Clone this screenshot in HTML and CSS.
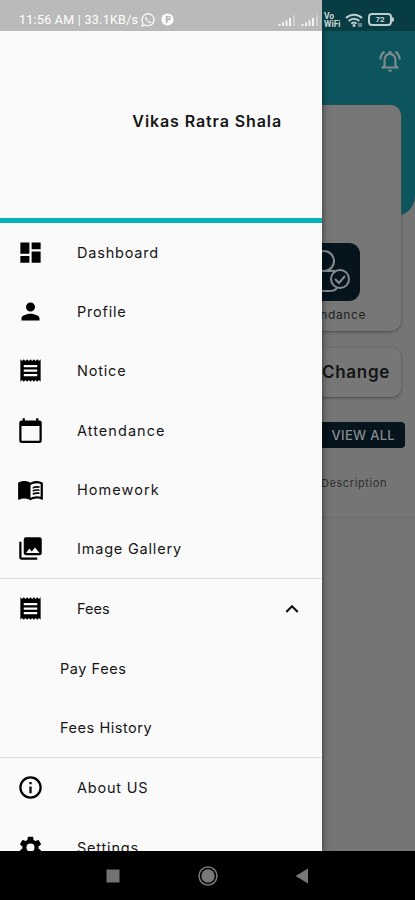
FILE: index.html
```html
<!DOCTYPE html>
<html lang="en">
<head>
<meta charset="utf-8">
<title>Vikas Ratra Shala</title>
<link rel="stylesheet" href="styles.css">
</head>
<body>
<div class="phone">
  <main class="page">
    <div class="hero">
      <svg class="bell" viewBox="0 0 24 24"><path d="M12 22a2 2 0 0 0 2-2h-4a2 2 0 0 0 2 2zm6-6v-5c0-3.070-1.630-5.640-4.500-6.320V4a1.500 1.500 0 0 0-3 0v.68C7.640 5.360 6 7.920 6 11v5l-2 2v1h16v-1l-2-2zm-2 1H8v-6c0-2.480 1.510-4.500 4-4.500s4 2.020 4 4.500v6zM7.580 4.080 6.150 2.650C3.750 4.480 2.170 7.300 2.030 10.500h2a8.450 8.450 0 0 1 3.550-6.420zM19.970 10.500h2c-.15-3.200-1.730-6.020-4.120-7.850l-1.420 1.430a8.500 8.500 0 0 1 3.540 6.420z"/></svg>
    </div>
    <section class="card">
      <div class="tile">
        <svg viewBox="0 0 58 58"><g fill="none" stroke="#858b8f" stroke-width="2"><circle cx="22" cy="18" r="10"/><path d="M34 29c-3-2-6-1-8-1H18C11 28 8 34 8 40v8h18c4 0 7 0 9-3"/><circle cx="38" cy="36" r="9"/><path d="m33 36 4 4 6-7"/></g></svg>
      </div>
      <span class="tile-label">Attendance</span>
    </section>
    <section class="change">Change</section>
    <div class="view-all">VIEW ALL</div>
    <div class="table-head"><span>Description</span></div>
  </main>

  <aside class="drawer">
    <header class="drawer-head">Vikas Ratra Shala</header>
    <nav class="menu">
      <a class="item"><svg viewBox="0 0 24 24"><path d="M3 13h8V3H3v10zm0 8h8v-6H3v6zm10 0h8V11h-8v10zm0-18v6h8V3h-8z"/></svg><span>Dashboard</span></a>
      <a class="item"><svg viewBox="0 0 24 24"><path d="M12 12a4 4 0 1 0 0-8 4 4 0 0 0 0 8zm0 2c-2.670 0-8 1.340-8 4v2h16v-2c0-2.660-5.330-4-8-4z"/></svg><span>Profile</span></a>
      <a class="item"><svg viewBox="0 0 24 24"><path d="M18 17H6v-2h12v2zm0-4H6v-2h12v2zm0-4H6V7h12v2zM3 22l1.500-1.500L6 22l1.500-1.500L9 22l1.500-1.500L12 22l1.500-1.500L15 22l1.500-1.500L18 22l1.500-1.500L21 22V2l-1.500 1.500L18 2l-1.500 1.500L15 2l-1.500 1.500L12 2l-1.500 1.500L9 2 7.500 3.500 6 2 4.500 3.500 3 2v20z"/></svg><span>Notice</span></a>
      <a class="item wide"><svg viewBox="0 0 24 24"><path d="M20 3h-1V1h-2v2H7V1H5v2H4a2 2 0 0 0-2 2v16c0 1.100.9 2 2 2h16a2 2 0 0 0 2-2V5a2 2 0 0 0-2-2zm0 18H4V8h16v13z"/></svg><span>Attendance</span></a>
      <a class="item wide"><svg viewBox="0 0 24 24"><path d="M21 5c-1.110-.35-2.330-.5-3.500-.5-1.950 0-4.050.4-5.500 1.500-1.450-1.100-3.550-1.500-5.500-1.500S2.450 4.900 1 6v14.650c0 .25.250.5.5.5.1 0 .15-.05.25-.05C3.100 20.450 5.050 20 6.500 20c1.950 0 4.050.4 5.500 1.500 1.350-.85 3.800-1.500 5.500-1.500 1.650 0 3.350.3 4.750 1.050.1.050.15.050.25.050.25 0 .5-.25.5-.5V6c-.6-.45-1.250-.75-2-1zm0 13.500c-1.100-.35-2.300-.5-3.500-.5-1.700 0-4.150.65-5.500 1.500V8c1.350-.85 3.800-1.500 5.500-1.500 1.200 0 2.400.15 3.500.5v11.500z"/><path d="M14 9.700c2-.8 4-.9 6-.5v1.500c-2-.4-4-.2-6 .6zm0 2.700c2-.8 4-.9 6-.5v1.500c-2-.4-4-.2-6 .6zm0 2.700c2-.8 4-.9 6-.5v1.500c-2-.4-4-.2-6 .6z"/></svg><span>Homework</span></a>
      <a class="item"><svg viewBox="0 0 24 24"><path d="M22 16V4a2 2 0 0 0-2-2H8a2 2 0 0 0-2 2v12c0 1.100.9 2 2 2h12a2 2 0 0 0 2-2zm-11-4 2.030 2.710L16 11l4 5H8l3-4zM2 6v14c0 1.100.9 2 2 2h14v-2H4V6H2z"/></svg><span>Image Gallery</span></a>
      <div class="group">
        <a class="item tight"><svg viewBox="0 0 24 24"><path d="M18 17H6v-2h12v2zm0-4H6v-2h12v2zm0-4H6V7h12v2zM3 22l1.500-1.500L6 22l1.500-1.500L9 22l1.500-1.500L12 22l1.500-1.500L15 22l1.500-1.500L18 22l1.500-1.500L21 22V2l-1.500 1.500L18 2l-1.500 1.500L15 2l-1.500 1.500L12 2l-1.500 1.500L9 2 7.500 3.500 6 2 4.500 3.500 3 2v20z"/></svg><span>Fees</span><svg class="chevron" viewBox="0 0 24 24"><path d="m12 8-6 6 1.410 1.410L12 10.830l4.590 4.580L18 14z"/></svg></a>
        <a class="item sub"><span>Pay Fees</span></a>
        <a class="item sub"><span>Fees History</span></a>
      </div>
      <a class="item"><svg viewBox="0 0 24 24"><path d="M11 7h2v2h-2zm0 4h2v6h-2zm1-9a10 10 0 1 0 0 20 10 10 0 0 0 0-20zm0 18a8 8 0 1 1 0-16 8 8 0 0 1 0 16z"/></svg><span>About US</span></a>
      <a class="item"><svg viewBox="0 0 24 24"><path d="M19.140 12.940c.04-.3.060-.61.060-.94 0-.32-.02-.64-.07-.94l2.030-1.580c.18-.14.230-.41.120-.61l-1.920-3.320c-.12-.22-.37-.29-.59-.22l-2.390.96c-.5-.38-1.030-.7-1.620-.94L14.400 2.810c-.04-.24-.24-.41-.48-.41h-3.840c-.24 0-.43.170-.47.410L9.250 5.350c-.59.240-1.130.570-1.620.940L5.240 5.330c-.22-.08-.47 0-.59.220L2.740 8.870c-.12.210-.08.470.120.610l2.030 1.580c-.05.300-.09.630-.09.940s.02.640.070.940l-2.030 1.580c-.18.140-.23.410-.12.610l1.920 3.320c.12.220.370.290.590.220l2.390-.96c.5.380 1.030.700 1.620.940l.36 2.540c.05.240.240.410.480.410h3.840c.24 0 .44-.17.470-.41l.36-2.540c.59-.24 1.130-.56 1.620-.94l2.390.96c.22.080.470 0 .59-.22l1.920-3.320c.12-.22.070-.47-.12-.61l-2.010-1.580zM12 15.600a3.600 3.600 0 1 1 0-7.200 3.600 3.600 0 0 1 0 7.200z"/></svg><span>Settings</span></a>
    </nav>
  </aside>

  <div class="status">
    <span class="clock">11:56 AM | 33.1KB/s</span>
    <svg class="whatsapp" viewBox="0 0 14 14"><path d="m1 13 .9-3.200A6 6 0 1 1 4.200 12z" fill="none" stroke="#fff" stroke-width="1.200"/><path d="M4.500 3.800c-1 1.200 0 3 1.500 4.500s3.300 2.200 4.200 1.100l-1.600-1.300-.9.600-1.900-2 .5-.9z" fill="#fff"/></svg>
    <svg class="badge" viewBox="0 0 14 14"><circle cx="7" cy="7" r="6.500" fill="#fff"/><path d="M5 3h3.500a2.200 2.200 0 0 1 0 5H7v3H5z" fill="#bababa"/><path d="M7 5h3" stroke="#fff" stroke-width="1"/></svg>
    <span class="spacer"></span>
    <svg class="signal" viewBox="0 0 18 12"><path d="M0 10h2v2H0zM3.500 8.500h2V12h-2zM7 6.500h2V12H7zM10.500 4h2v8h-2z" fill="#f3f3f3"/><path d="M14.500 1h2v11h-2z" fill="#d0d0d0"/></svg>
    <svg class="signal" viewBox="0 0 18 12"><path d="M0 10h2v2H0zM3.500 8.500h2V12h-2zM7 6.500h2V12H7zM10.500 4h2v8h-2z" fill="#f3f3f3"/><path d="M14.500 1h2v11h-2z" fill="#d0d0d0"/></svg>
    <span class="vowifi">Vo<br>WiFi</span>
    <svg class="wifi" viewBox="0 0 18 14"><g fill="none" stroke="#bdcccd" stroke-width="2"><path d="M1 5c4.500-4.500 11.500-4.500 16 0"/><path d="M3.700 8c3-3 7.600-3 10.600 0"/><path d="M6.300 10.700c1.600-1.500 3.800-1.500 5.400 0"/></g><circle cx="9" cy="12.500" r="1.500" fill="#bdcccd"/><path d="M14 10v4m2-4v4" stroke="#bdcccd"/></svg>
    <span class="battery">72</span>
  </div>

  <footer class="navbar">
    <svg viewBox="0 0 24 24"><path d="M5.500 5.500h13v13h-13z" fill="#737373"/></svg>
    <svg viewBox="0 0 24 24"><circle cx="12" cy="12" r="9" fill="none" stroke="#777" stroke-width="1.500"/><circle cx="12" cy="12" r="6.700" fill="#777"/></svg>
    <svg viewBox="0 0 24 24"><path d="M4.500 12 17 4.500v15z" fill="#777"/></svg>
  </footer>
</div>
</body>
</html>
```
FILE: styles.css
```css
* { box-sizing: border-box; }

body {
  margin: 0;
  font-family: Inter, "Liberation Sans", sans-serif;
  color: #161616;
}

.phone {
  position: relative;
  display: flex;
  flex-direction: column;
  width: 415px;
  height: 900px;
  overflow: hidden;
  background: #000;
}

/* Dimmed screen behind the drawer */
.page {
  display: flex;
  flex-direction: column;
  align-items: flex-end;
  height: 851px;
  background: #757575;
  color: #121416;
}
.hero {
  flex: none;
  display: flex;
  justify-content: flex-end;
  align-items: flex-start;
  width: 100%;
  height: 216px;
  padding: 48px 12px 0 0;
  border-radius: 0 0 20px 20px;
  background: #0d555e;
}
.bell { width: 26px; height: 26px; fill: #7d8b8c; }
.card {
  flex: none;
  display: flex;
  flex-direction: column;
  align-items: flex-end;
  width: 386px;
  height: 226px;
  margin: -111px 14px 0 0;
  padding: 138px 41px 0 0;
  border-radius: 10px;
  background: #777;
  box-shadow: 0 1px 3px #4b4b4b;
}
.tile {
  width: 58px;
  height: 58px;
  border-radius: 11px;
  background: #06141d;
}
.tile svg { display: block; width: 58px; height: 58px; }
.tile-label {
  margin: 6px -6px 0 0;
  font-size: 12px;
  line-height: 15px;
  letter-spacing: 0.6px;
  color: #222;
}
.change {
  flex: none;
  width: 386px;
  height: 49px;
  margin: 17px 14px 0 0;
  padding-right: 11px;
  border-radius: 9px;
  background: #777;
  box-shadow: 0 1px 3px #4b4b4b;
  font-size: 17px;
  font-weight: 600;
  line-height: 49px;
  letter-spacing: 0.7px;
  text-align: right;
}
.view-all {
  flex: none;
  width: 100px;
  height: 26px;
  margin: 25px 10px 0 0;
  padding-right: 10px;
  border-radius: 4px;
  background: #06141d;
  color: #858b8f;
  font-size: 13px;
  font-weight: 500;
  line-height: 27px;
  letter-spacing: 0.3px;
  text-align: right;
}
.table-head {
  flex: none;
  width: 100%;
  height: 70px;
  padding: 27px 28px 0 0;
  border-bottom: 1px solid #6c6c6c;
  font-size: 11px;
  line-height: 16px;
  letter-spacing: 0.6px;
  text-align: right;
  color: #303030;
}

/* Drawer */
.drawer {
  position: absolute;
  top: 0;
  left: 0;
  width: 322px;
  height: 851px;
  overflow: hidden;
  background: #fafafa;
  box-shadow: 0 0 7px rgba(0, 0, 0, 0.6);
}
.drawer-head {
  height: 222.500px;
  padding: 110px 40px 0 0;
  border-bottom: 5px solid #06b2b9;
  font-size: 16px;
  font-weight: 600;
  line-height: 22px;
  letter-spacing: 0.900px;
  text-align: right;
}
.item {
  display: flex;
  align-items: center;
  height: 59.300px;
  padding: 0 17px;
  font-size: 14.500px;
  letter-spacing: 0.800px;
}
.item.wide { letter-spacing: 1.050px; }
.item.tight { letter-spacing: 0; }
.item svg { width: 27px; height: 27px; margin-right: 33px; fill: #000; }
.item .chevron { width: 26px; height: 26px; margin: 0 0 0 auto; fill: #111; }
.item.sub { padding-left: 60px; letter-spacing: 0.550px; }
.group {
  border-top: 1px solid #e0e0e0;
  border-bottom: 1px solid #e0e0e0;
}

/* System bars */
.status {
  position: absolute;
  top: 0;
  left: 0;
  display: flex;
  align-items: center;
  width: 415px;
  height: 31px;
  padding: 8px 20px 0 19px;
  background: linear-gradient(90deg, #bababa 322px, #083c43 322px);
  color: #fff;
}
.clock {
  width: 119px;
  font: 12.500px/16px Roboto, sans-serif;
  letter-spacing: 0.270px;
  white-space: nowrap;
}
.whatsapp { width: 14px; height: 14px; margin-left: 3px; }
.badge { width: 13px; height: 13px; margin-left: 6px; }
.spacer { flex: 1; }
.signal { width: 19px; height: 12px; margin-right: 4px; }
.vowifi {
  width: 18px;
  color: #c7d4d5;
  font: 700 8.500px/8px Roboto, sans-serif;
}
.wifi { width: 18px; height: 14px; margin: 0 5px 0 3px; }
.battery {
  position: relative;
  width: 24px;
  height: 13px;
  margin-right: 3px;
  border: 2px solid #bdcccd;
  border-radius: 4px;
  color: #c7d4d5;
  font: 700 8px/9px Roboto, sans-serif;
  text-align: center;
}
.battery::after {
  content: "";
  position: absolute;
  top: 2px;
  right: -4px;
  width: 2px;
  height: 5px;
  border-radius: 0 2px 2px 0;
  background: #bdcccd;
}
.navbar {
  display: flex;
  align-items: center;
  justify-content: center;
  gap: 71px;
  height: 49px;
  padding-left: 1px;
}
.navbar svg { width: 24px; height: 24px; }
```
